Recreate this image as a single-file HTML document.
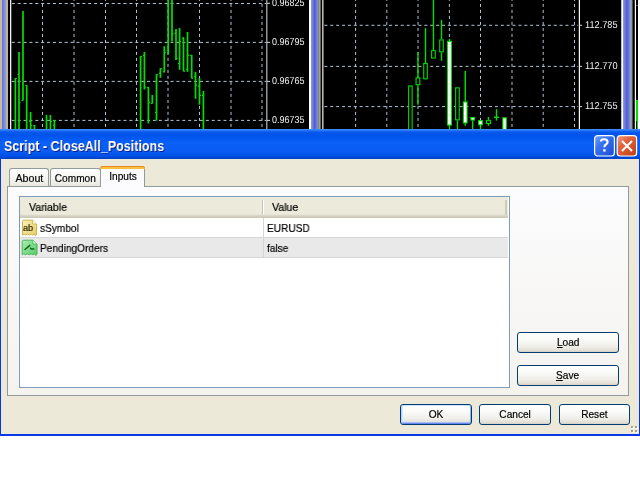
<!DOCTYPE html>
<html><head><meta charset="utf-8">
<style>
*{margin:0;padding:0;box-sizing:border-box}
html,body{width:640px;height:480px;overflow:hidden;background:#fff;font-family:"Liberation Sans",sans-serif}
.tab,#tabsel,.htxt,.rtxt,.btn{-webkit-text-stroke:0.2px #000}
.abs{position:absolute;will-change:transform}
.sx{display:inline-block;transform:scaleX(0.92)}
#title{left:0;top:129px;width:640px;height:30px;
 background:linear-gradient(to bottom,#4a96ff 0px,#2474fa 1.5px,#0a58ec 3px,#0054ea 6px,#0a60f8 14px,#0a5cf4 22px,#0052e6 27px,#0046d4 29px,#003cc4 30px);
}
#ttext{left:4px;top:137.8px;color:#fff;font-weight:bold;font-size:14px;transform:scaleX(0.895);transform-origin:0 0;text-shadow:1px 1px 0 #0a1e80;white-space:nowrap}
#frame{left:0;top:159px;width:640px;height:277px;background:#0638e8}
#client{left:1px;top:159px;width:638px;height:275px;background:#ece9d8}
.tbtn{top:135px;width:21px;height:21px;border:1px solid #fff;border-radius:3px}
#help{left:594px;background:linear-gradient(135deg,#6d9dff,#2a66ee 50%,#1850d8)}
#close{left:617px;width:20px;background:linear-gradient(135deg,#f08a60,#e05a2a 50%,#c8401a)}
.tab{top:168px;height:19px;border:1px solid #919b9c;border-bottom:none;border-radius:3px 3px 0 0;
 background:linear-gradient(to bottom,#fff,#f3f3ef 60%,#e8e6dc);font-size:11px;color:#000;text-align:center;padding-top:3px}
#panel{left:7px;top:186px;width:622px;height:210px;border:1px solid #919b9c;
 background:linear-gradient(to bottom,#fcfcfe,#f4f3ee)}
#tabsel{left:100px;top:166px;width:45px;height:21px;border:1px solid #919b9c;border-bottom:none;border-radius:3px 3px 0 0;background:#fcfcfe;
 font-size:11px;text-align:center;padding-top:3px}
#tabsel:before{content:"";position:absolute;left:-1px;right:-1px;top:-1px;height:2px;background:#fbc03a;border-radius:3px 3px 0 0;border-top:1px solid #e68b2c}
#lv{left:19px;top:196px;width:491px;height:192px;border:1px solid #7f9db9;background:#fff}
#hdr{left:20px;top:197px;width:488px;height:21px;background:linear-gradient(to bottom,#ebeadb 0,#ebeadb 17px,#e2decd 18px,#d6d2c2 19px,#cbc7b8 21px)}
.htxt{top:201px;font-size:11px;color:#000;transform:scaleX(0.96);transform-origin:0 0}
#hd1{left:262px;top:200px;width:1px;height:15px;background:#c7c5b2}
#hd2{left:263px;top:200px;width:1px;height:15px;background:#fff}
#hd3{left:505px;top:200px;width:2px;height:15px;background:#cdcab8}
#row2{left:20px;top:238px;width:488px;height:19px;background:#e9e9e9}
.gl{background:#d6d6d6}
.rtxt{font-size:11px;color:#000;white-space:nowrap;transform:scaleX(0.92);transform-origin:0 0}
.btn{border:1px solid #003c74;border-radius:3px;background:linear-gradient(to bottom,#fff 0,#fbfbf8 30%,#f0efea 70%,#e3e1d8 90%,#d6d0c5 100%);
 font-size:11px;text-align:center;color:#000}
#ok{box-shadow:inset 0 1px 0 #cee7ff, inset 1px 0 0 #b8d2f8, inset -1px 0 0 #8cb0f4, inset 0 -1px 0 #6c86ec, inset 0 -2px 0 #a4c0f8, inset 1px 0 0 1px #d8e8fc}
</style></head><body>
<svg width="640" height="130" viewBox="0 0 640 130" style="position:absolute;left:0;top:0;will-change:transform">
<rect x="0" y="0" width="640" height="130" fill="#000"/>
<defs><linearGradient id="fb" x1="0" x2="1" y1="0" y2="0"><stop offset="0" stop-color="#8a9ee8"/><stop offset="0.5" stop-color="#5558cc"/><stop offset="1" stop-color="#86a6ee"/></linearGradient><linearGradient id="fl" x1="0" x2="1" y1="0" y2="0"><stop offset="0" stop-color="#6470dc"/><stop offset="1" stop-color="#8ea0ee"/></linearGradient></defs>
<rect x="0" y="0" width="2" height="130" fill="#c6bc9c"/>
<rect x="2" y="0" width="4.3" height="130" fill="url(#fl)"/>
<rect x="6" y="0" width="2" height="130" fill="#c0b490"/>
<rect x="10" y="0" width="1.3" height="130" fill="#f0f0f0"/>
<rect x="266.2" y="0" width="1.2" height="130" fill="#b8b8b8"/>
<rect x="309" y="0" width="2" height="130" fill="#ffffff"/>
<rect x="311" y="0" width="7.6" height="130" fill="url(#fb)"/>
<rect x="318.6" y="0" width="2" height="130" fill="#b0a484"/>
<rect x="322" y="0" width="1.6" height="130" fill="#b4b4b4"/>
<rect x="578.8" y="0" width="1.2" height="130" fill="#f8f8f8"/>
<rect x="621" y="0" width="1" height="130" fill="#c8c0a8"/>
<rect x="622" y="0" width="1" height="130" fill="#ffffff"/>
<rect x="623" y="0" width="8" height="130" fill="url(#fb)"/>
<rect x="631" y="0" width="1.5" height="130" fill="#a09880"/>
<rect x="634.8" y="0" width="1.2" height="130" fill="#ffffff"/>
<rect x="638" y="0" width="2" height="130" fill="#ffffff"/>
<rect x="636" y="100" width="2" height="21.3" fill="#00e000"/>
<rect x="637" y="121" width="1" height="9" fill="#00e000"/>
<rect x="636.5" y="5" width="1" height="1" fill="#8ab0d0"/>
<line x1="42.5" y1="-2.1" x2="42.5" y2="130" stroke="#b4c4d4" stroke-width="1" stroke-dasharray="3 3"/>
<line x1="74" y1="-2.1" x2="74" y2="130" stroke="#b4c4d4" stroke-width="1" stroke-dasharray="3 3"/>
<line x1="105.5" y1="-2.1" x2="105.5" y2="130" stroke="#b4c4d4" stroke-width="1" stroke-dasharray="3 3"/>
<line x1="136.5" y1="-2.1" x2="136.5" y2="130" stroke="#b4c4d4" stroke-width="1" stroke-dasharray="3 3"/>
<line x1="168" y1="-2.1" x2="168" y2="130" stroke="#b4c4d4" stroke-width="1" stroke-dasharray="3 3"/>
<line x1="199.5" y1="-2.1" x2="199.5" y2="130" stroke="#b4c4d4" stroke-width="1" stroke-dasharray="3 3"/>
<line x1="231" y1="-2.1" x2="231" y2="130" stroke="#b4c4d4" stroke-width="1" stroke-dasharray="3 3"/>
<line x1="262" y1="-2.1" x2="262" y2="130" stroke="#b4c4d4" stroke-width="1" stroke-dasharray="3 3"/>
<line x1="11.8" y1="3.5" x2="266" y2="3.5" stroke="#b4c4d4" stroke-width="1" stroke-dasharray="3 2.88"/>
<line x1="11.8" y1="42.4" x2="266" y2="42.4" stroke="#b4c4d4" stroke-width="1" stroke-dasharray="3 2.88"/>
<line x1="11.8" y1="81.4" x2="266" y2="81.4" stroke="#b4c4d4" stroke-width="1" stroke-dasharray="3 2.88"/>
<line x1="11.8" y1="120.4" x2="266" y2="120.4" stroke="#b4c4d4" stroke-width="1" stroke-dasharray="3 2.88"/>
<line x1="355.6" y1="-2.1" x2="355.6" y2="130" stroke="#b4c4d4" stroke-width="1" stroke-dasharray="3 3"/>
<line x1="386.8" y1="-2.1" x2="386.8" y2="130" stroke="#b4c4d4" stroke-width="1" stroke-dasharray="3 3"/>
<line x1="418" y1="-2.1" x2="418" y2="130" stroke="#b4c4d4" stroke-width="1" stroke-dasharray="3 3"/>
<line x1="449.4" y1="-2.1" x2="449.4" y2="130" stroke="#b4c4d4" stroke-width="1" stroke-dasharray="3 3"/>
<line x1="480.5" y1="-2.1" x2="480.5" y2="130" stroke="#b4c4d4" stroke-width="1" stroke-dasharray="3 3"/>
<line x1="512" y1="-2.1" x2="512" y2="130" stroke="#b4c4d4" stroke-width="1" stroke-dasharray="3 3"/>
<line x1="543.2" y1="-2.1" x2="543.2" y2="130" stroke="#b4c4d4" stroke-width="1" stroke-dasharray="3 3"/>
<line x1="574.5" y1="-2.1" x2="574.5" y2="130" stroke="#b4c4d4" stroke-width="1" stroke-dasharray="3 3"/>
<line x1="324.4" y1="25.3" x2="578" y2="25.3" stroke="#b4c4d4" stroke-width="1" stroke-dasharray="3 2.88"/>
<line x1="324.4" y1="66.4" x2="578" y2="66.4" stroke="#b4c4d4" stroke-width="1" stroke-dasharray="3 2.88"/>
<line x1="324.4" y1="106.6" x2="578" y2="106.6" stroke="#b4c4d4" stroke-width="1" stroke-dasharray="3 2.88"/>
<line x1="267" y1="3.3" x2="270" y2="3.3" stroke="#ddd" stroke-width="1"/>
<text x="272" y="5.5" fill="#f4f4f4" font-family="Liberation Sans" font-size="10" text-rendering="geometricPrecision" textLength="32.5" lengthAdjust="spacingAndGlyphs">0.96825</text>
<line x1="267" y1="42.4" x2="270" y2="42.4" stroke="#ddd" stroke-width="1"/>
<text x="272" y="45.4" fill="#f4f4f4" font-family="Liberation Sans" font-size="10" text-rendering="geometricPrecision" textLength="32.5" lengthAdjust="spacingAndGlyphs">0.96795</text>
<line x1="267" y1="81.4" x2="270" y2="81.4" stroke="#ddd" stroke-width="1"/>
<text x="272" y="84.4" fill="#f4f4f4" font-family="Liberation Sans" font-size="10" text-rendering="geometricPrecision" textLength="32.5" lengthAdjust="spacingAndGlyphs">0.96765</text>
<line x1="267" y1="120.4" x2="270" y2="120.4" stroke="#ddd" stroke-width="1"/>
<text x="272" y="123.4" fill="#f4f4f4" font-family="Liberation Sans" font-size="10" text-rendering="geometricPrecision" textLength="32.5" lengthAdjust="spacingAndGlyphs">0.96735</text>
<line x1="579" y1="25.3" x2="582" y2="25.3" stroke="#ddd" stroke-width="1"/>
<text x="585" y="28.3" fill="#f4f4f4" font-family="Liberation Sans" font-size="10" text-rendering="geometricPrecision" textLength="32.5" lengthAdjust="spacingAndGlyphs">112.785</text>
<line x1="579" y1="66.4" x2="582" y2="66.4" stroke="#ddd" stroke-width="1"/>
<text x="585" y="69.4" fill="#f4f4f4" font-family="Liberation Sans" font-size="10" text-rendering="geometricPrecision" textLength="32.5" lengthAdjust="spacingAndGlyphs">112.770</text>
<line x1="579" y1="106.6" x2="582" y2="106.6" stroke="#ddd" stroke-width="1"/>
<text x="585" y="108.69999999999999" fill="#f4f4f4" font-family="Liberation Sans" font-size="10" text-rendering="geometricPrecision" textLength="32.5" lengthAdjust="spacingAndGlyphs">112.755</text>
<line x1="15.4" y1="78" x2="15.4" y2="130" stroke="#00e000" stroke-width="1.7"/>
<line x1="15.4" y1="78.5" x2="16.9" y2="78.5" stroke="#00e000" stroke-width="1.2"/>
<line x1="19.0" y1="52" x2="19.0" y2="130" stroke="#00e000" stroke-width="1.7"/>
<line x1="17.5" y1="74.4" x2="19.0" y2="74.4" stroke="#00e000" stroke-width="1.2"/>
<line x1="19.0" y1="102.5" x2="20.5" y2="102.5" stroke="#00e000" stroke-width="1.2"/>
<line x1="23.0" y1="11" x2="23.0" y2="100.5" stroke="#00e000" stroke-width="1.7"/>
<line x1="21.5" y1="100.5" x2="23.0" y2="100.5" stroke="#00e000" stroke-width="1.2"/>
<line x1="26.7" y1="85.2" x2="26.7" y2="130" stroke="#00e000" stroke-width="1.7"/>
<line x1="25.2" y1="85.5" x2="26.7" y2="85.5" stroke="#00e000" stroke-width="1.2"/>
<line x1="30.6" y1="112" x2="30.6" y2="130" stroke="#00e000" stroke-width="1.7"/>
<line x1="29.1" y1="121.3" x2="30.6" y2="121.3" stroke="#00e000" stroke-width="1.2"/>
<line x1="30.6" y1="125.3" x2="32.1" y2="125.3" stroke="#00e000" stroke-width="1.2"/>
<line x1="34.5" y1="125" x2="34.5" y2="130" stroke="#00e000" stroke-width="1.7"/>
<line x1="33.0" y1="125.5" x2="34.5" y2="125.5" stroke="#00e000" stroke-width="1.2"/>
<line x1="46.5" y1="115" x2="46.5" y2="130" stroke="#00e000" stroke-width="1.7"/>
<line x1="50.4" y1="115" x2="50.4" y2="130" stroke="#00e000" stroke-width="1.7"/>
<line x1="50.4" y1="121.5" x2="51.9" y2="121.5" stroke="#00e000" stroke-width="1.2"/>
<line x1="54.4" y1="120" x2="54.4" y2="130" stroke="#00e000" stroke-width="1.7"/>
<line x1="52.9" y1="125.4" x2="54.4" y2="125.4" stroke="#00e000" stroke-width="1.2"/>
<line x1="54.4" y1="120.5" x2="55.9" y2="120.5" stroke="#00e000" stroke-width="1.2"/>
<line x1="140.6" y1="56.2" x2="140.6" y2="130" stroke="#00e000" stroke-width="1.7"/>
<line x1="140.6" y1="56.5" x2="142.1" y2="56.5" stroke="#00e000" stroke-width="1.2"/>
<line x1="144.4" y1="52" x2="144.4" y2="89.5" stroke="#00e000" stroke-width="1.7"/>
<line x1="142.9" y1="55.4" x2="144.4" y2="55.4" stroke="#00e000" stroke-width="1.2"/>
<line x1="144.4" y1="87" x2="145.9" y2="87" stroke="#00e000" stroke-width="1.2"/>
<line x1="148.4" y1="87" x2="148.4" y2="123.4" stroke="#00e000" stroke-width="1.7"/>
<line x1="146.9" y1="87.5" x2="148.4" y2="87.5" stroke="#00e000" stroke-width="1.2"/>
<line x1="148.4" y1="102.3" x2="149.9" y2="102.3" stroke="#00e000" stroke-width="1.2"/>
<line x1="152.3" y1="95" x2="152.3" y2="103.5" stroke="#00e000" stroke-width="1.7"/>
<line x1="150.8" y1="103.5" x2="152.3" y2="103.5" stroke="#00e000" stroke-width="1.2"/>
<line x1="156.5" y1="74.2" x2="156.5" y2="120.6" stroke="#00e000" stroke-width="1.7"/>
<line x1="155.0" y1="112.5" x2="156.5" y2="112.5" stroke="#00e000" stroke-width="1.2"/>
<line x1="156.5" y1="74.5" x2="158.0" y2="74.5" stroke="#00e000" stroke-width="1.2"/>
<line x1="160.4" y1="68.3" x2="160.4" y2="77.8" stroke="#00e000" stroke-width="1.7"/>
<line x1="158.9" y1="73.3" x2="160.4" y2="73.3" stroke="#00e000" stroke-width="1.2"/>
<line x1="160.4" y1="68.7" x2="161.9" y2="68.7" stroke="#00e000" stroke-width="1.2"/>
<line x1="164.3" y1="46.2" x2="164.3" y2="72.5" stroke="#00e000" stroke-width="1.7"/>
<line x1="162.8" y1="71.7" x2="164.3" y2="71.7" stroke="#00e000" stroke-width="1.2"/>
<line x1="164.3" y1="52.5" x2="165.8" y2="52.5" stroke="#00e000" stroke-width="1.2"/>
<line x1="168.2" y1="0" x2="168.2" y2="54.5" stroke="#00e000" stroke-width="1.7"/>
<line x1="166.7" y1="50.4" x2="168.2" y2="50.4" stroke="#00e000" stroke-width="1.2"/>
<line x1="172.0" y1="0" x2="172.0" y2="41.4" stroke="#00e000" stroke-width="1.7"/>
<line x1="172.0" y1="34.2" x2="173.5" y2="34.2" stroke="#00e000" stroke-width="1.2"/>
<line x1="176.0" y1="29" x2="176.0" y2="60.1" stroke="#00e000" stroke-width="1.7"/>
<line x1="174.5" y1="33.3" x2="176.0" y2="33.3" stroke="#00e000" stroke-width="1.2"/>
<line x1="176.0" y1="58.3" x2="177.5" y2="58.3" stroke="#00e000" stroke-width="1.2"/>
<line x1="179.6" y1="28" x2="179.6" y2="69.8" stroke="#00e000" stroke-width="1.7"/>
<line x1="178.1" y1="63.4" x2="179.6" y2="63.4" stroke="#00e000" stroke-width="1.2"/>
<line x1="179.6" y1="41.3" x2="181.1" y2="41.3" stroke="#00e000" stroke-width="1.2"/>
<line x1="183.5" y1="37.3" x2="183.5" y2="71.4" stroke="#00e000" stroke-width="1.7"/>
<line x1="182.0" y1="38.2" x2="183.5" y2="38.2" stroke="#00e000" stroke-width="1.2"/>
<line x1="183.5" y1="71.2" x2="185.0" y2="71.2" stroke="#00e000" stroke-width="1.2"/>
<line x1="187.5" y1="32" x2="187.5" y2="71.9" stroke="#00e000" stroke-width="1.7"/>
<line x1="186.0" y1="69.5" x2="187.5" y2="69.5" stroke="#00e000" stroke-width="1.2"/>
<line x1="187.5" y1="55.3" x2="189.0" y2="55.3" stroke="#00e000" stroke-width="1.2"/>
<line x1="191.7" y1="55" x2="191.7" y2="78.4" stroke="#00e000" stroke-width="1.7"/>
<line x1="190.2" y1="55.4" x2="191.7" y2="55.4" stroke="#00e000" stroke-width="1.2"/>
<line x1="191.7" y1="78.2" x2="193.2" y2="78.2" stroke="#00e000" stroke-width="1.2"/>
<line x1="195.5" y1="71.9" x2="195.5" y2="98.8" stroke="#00e000" stroke-width="1.7"/>
<line x1="194.0" y1="76.4" x2="195.5" y2="76.4" stroke="#00e000" stroke-width="1.2"/>
<line x1="195.5" y1="85.2" x2="197.0" y2="85.2" stroke="#00e000" stroke-width="1.2"/>
<line x1="199.5" y1="78" x2="199.5" y2="104.7" stroke="#00e000" stroke-width="1.7"/>
<line x1="198.0" y1="86.2" x2="199.5" y2="86.2" stroke="#00e000" stroke-width="1.2"/>
<line x1="199.5" y1="95.4" x2="201.0" y2="95.4" stroke="#00e000" stroke-width="1.2"/>
<line x1="203.4" y1="90.9" x2="203.4" y2="130" stroke="#00e000" stroke-width="1.7"/>
<line x1="201.9" y1="95.4" x2="203.4" y2="95.4" stroke="#00e000" stroke-width="1.2"/>
<rect x="408.65000000000003" y="85.95" width="3.499999999999966" height="44.49999999999999" fill="#000" stroke="#00e000" stroke-width="1.1"/>
<line x1="417.95" y1="52" x2="417.95" y2="77.3" stroke="#00e000" stroke-width="1.4"/>
<line x1="417.95" y1="85.2" x2="417.95" y2="104.8" stroke="#00e000" stroke-width="1.4"/>
<rect x="416.05" y="77.85" width="3.799999999999977" height="6.800000000000006" fill="#000" stroke="#00e000" stroke-width="1.1"/>
<line x1="425.5" y1="28.1" x2="425.5" y2="63" stroke="#00e000" stroke-width="1.4"/>
<rect x="423.75" y="63.55" width="3.5000000000000226" height="15.300000000000006" fill="#000" stroke="#00e000" stroke-width="1.1"/>
<line x1="433.45000000000005" y1="-2" x2="433.45000000000005" y2="50.1" stroke="#00e000" stroke-width="1.4"/>
<rect x="431.65000000000003" y="50.65" width="3.5999999999999885" height="7.4" fill="#000" stroke="#00e000" stroke-width="1.1"/>
<line x1="441.5" y1="19.9" x2="441.5" y2="39.4" stroke="#00e000" stroke-width="1.4"/>
<line x1="441.5" y1="52.4" x2="441.5" y2="60.8" stroke="#00e000" stroke-width="1.4"/>
<rect x="439.75" y="39.949999999999996" width="3.5000000000000226" height="11.9" fill="#000" stroke="#00e000" stroke-width="1.1"/>
<line x1="449.5" y1="38.9" x2="449.5" y2="40.8" stroke="#00e000" stroke-width="1.4"/>
<line x1="449.5" y1="125.6" x2="449.5" y2="131" stroke="#00e000" stroke-width="1.4"/>
<rect x="447.55" y="41.349999999999994" width="3.9" height="83.7" fill="#fff" stroke="#00e000" stroke-width="1.1"/>
<line x1="457.45000000000005" y1="120.4" x2="457.45000000000005" y2="131" stroke="#00e000" stroke-width="1.4"/>
<rect x="455.65000000000003" y="87.85" width="3.5999999999999885" height="32.00000000000001" fill="#000" stroke="#00e000" stroke-width="1.1"/>
<line x1="465.25" y1="70.9" x2="465.25" y2="101.4" stroke="#00e000" stroke-width="1.4"/>
<line x1="465.25" y1="123.5" x2="465.25" y2="125.8" stroke="#00e000" stroke-width="1.4"/>
<rect x="463.45" y="101.95" width="3.6000000000000454" height="20.999999999999993" fill="#fff" stroke="#00e000" stroke-width="1.1"/>
<line x1="472.65" y1="120.6" x2="472.65" y2="131" stroke="#00e000" stroke-width="1.4"/>
<rect x="470.95" y="117.55" width="3.4" height="2.4999999999999942" fill="#fff" stroke="#00e000" stroke-width="1.1"/>
<line x1="480.45000000000005" y1="125.3" x2="480.45000000000005" y2="131" stroke="#00e000" stroke-width="1.4"/>
<rect x="478.65000000000003" y="120.64999999999999" width="3.5999999999999885" height="4.100000000000003" fill="#fff" stroke="#00e000" stroke-width="1.1"/>
<line x1="488.45" y1="117" x2="488.45" y2="120.1" stroke="#00e000" stroke-width="1.4"/>
<line x1="488.45" y1="124.0" x2="488.45" y2="125.8" stroke="#00e000" stroke-width="1.4"/>
<rect x="486.45" y="120.64999999999999" width="4.000000000000023" height="2.8000000000000056" fill="#000" stroke="#00e000" stroke-width="1.1"/>
<line x1="496.5" y1="109.2" x2="496.5" y2="117.3" stroke="#00e000" stroke-width="1.4"/>
<line x1="496.5" y1="117.3" x2="496.5" y2="120.6" stroke="#00e000" stroke-width="1.4"/>
<line x1="494.0" y1="117.3" x2="499.0" y2="117.3" stroke="#00e000" stroke-width="1.4"/>
<rect x="502.85" y="117.85" width="3.4" height="12.600000000000003" fill="#fff" stroke="#00e000" stroke-width="1.1"/>
</svg>
<div class="abs" id="frame"></div>
<div class="abs" id="client"></div>
<div class="abs" id="title"></div>
<div class="abs" id="ttext">Script - CloseAll_Positions</div>
<svg class="abs" style="left:593px;top:134px" width="46" height="23" viewBox="0 0 46 23">
<defs>
<linearGradient id="hb" x1="0" y1="0" x2="1" y2="1"><stop offset="0" stop-color="#7aa6ff"/><stop offset="0.35" stop-color="#3a74f4"/><stop offset="1" stop-color="#1a4ad0"/></linearGradient>
<linearGradient id="cb" x1="0" y1="0" x2="1" y2="1"><stop offset="0" stop-color="#f2a088"/><stop offset="0.35" stop-color="#e2643c"/><stop offset="1" stop-color="#c03c14"/></linearGradient>
</defs>
<rect x="1.6" y="1.6" width="19.8" height="20.4" rx="3" fill="url(#hb)" stroke="#fff" stroke-width="1.2"/>
<path d="M8,7.4 Q8,5.2 11.2,5.2 Q14.6,5.2 14.6,8 Q14.6,9.8 12.6,10.8 Q11.4,11.4 11.4,13.2" fill="none" stroke="#fff" stroke-width="2.1"/>
<rect x="10.2" y="15.2" width="2.4" height="2.4" fill="#fff"/>
<rect x="24.2" y="1.6" width="19.4" height="20.4" rx="3" fill="url(#cb)" stroke="#fff" stroke-width="1.2"/>
<path d="M29,7 L39,17 M39,7 L29,17" stroke="#fff" stroke-width="2"/>
</svg>
<div class="abs tab" style="left:9px;width:40px"><span class="sx" style="transform:scaleX(0.97)">About</span></div>
<div class="abs tab" style="left:50px;width:51px"><span class="sx">Common</span></div>
<div class="abs" id="panel"></div>
<div class="abs" id="tabsel"><span class="sx">Inputs</span></div>
<div class="abs" id="lv"></div>
<div class="abs" id="hdr"></div>
<div class="abs" id="hd1"></div><div class="abs" id="hd2"></div><div class="abs" id="hd3"></div>
<div class="abs htxt" style="left:29px">Variable</div>
<div class="abs htxt" style="left:272px">Value</div>
<div class="abs" id="row2"></div>
<div class="abs gl" style="left:20px;top:237px;width:488px;height:1px"></div>
<div class="abs gl" style="left:20px;top:257px;width:488px;height:1px"></div>
<div class="abs gl" style="left:263px;top:218px;width:1px;height:40px"></div>
<svg class="abs" style="left:21px;top:219px" width="17" height="18" viewBox="0 0 17 18">
<defs><linearGradient id="gy" x1="0" y1="0" x2="1" y2="1"><stop offset="0" stop-color="#fbf0b8"/><stop offset="1" stop-color="#e6cc68"/></linearGradient>
<linearGradient id="gg" x1="0" y1="0" x2="1" y2="1"><stop offset="0" stop-color="#a8eeb0"/><stop offset="1" stop-color="#58c868"/></linearGradient></defs>
<path d="M1.5,2.5 Q1.5,1.2 2.8,1.2 L11.5,1.2 L15.6,5 L15.6,15.2 L14.4,16.8 L13.2,15 L11.6,16 L10,15 L8.2,16 L6.4,15 L4.6,16 L3,15 L1.5,16.2 Z" fill="url(#gy)" stroke="#cdb24a" stroke-width="1"/>
<path d="M11.5,1.2 L11.5,5 L15.6,5" fill="#fffbe0" stroke="#cdb24a" stroke-width="0.8"/>
<text x="2" y="11.7" font-family="Liberation Sans" font-size="9.2" fill="#2e2800" stroke="#2e2800" stroke-width="0.2">ab</text>
</svg>
<svg class="abs" style="left:21px;top:239px" width="17" height="18" viewBox="0 0 17 18">
<path d="M1.2,2.5 Q1.2,1.2 2.6,1.2 L11.8,1.2 L16,5 L16,15 L14.8,16.5 L13.4,14.8 L11.8,15.8 L10,14.8 L8.2,15.8 L6.4,14.8 L4.6,15.8 L2.8,14.8 L1.2,15.8 Z" fill="url(#gg)" stroke="#48b458" stroke-width="1"/>
<path d="M11.8,1.2 L11.8,5 L16,5" fill="#d8f8dc" stroke="#48b458" stroke-width="0.8"/>
<path d="M4,10.5 L8.8,6.4" stroke="#0a6a14" stroke-width="1.5" fill="none" stroke-linecap="round"/>
<path d="M9.6,9.2 L9.8,9.8 L12.8,10" stroke="#0a6a14" stroke-width="1.4" fill="none" stroke-linecap="round"/>
</svg>
<div class="abs rtxt" style="left:40px;top:222px">sSymbol</div>
<div class="abs rtxt" style="left:267px;top:222px">EURUSD</div>
<div class="abs rtxt" style="left:40px;top:242px">PendingOrders</div>
<div class="abs rtxt" style="left:267px;top:242px">false</div>
<div class="abs btn" style="left:517px;top:332px;width:102px;height:21px;padding-top:3.4px"><span class="sx"><u>L</u>oad</span></div>
<div class="abs btn" style="left:517px;top:365px;width:102px;height:21px;padding-top:3.4px"><span class="sx"><u>S</u>ave</span></div>
<div class="abs btn" id="ok" style="left:400px;top:404px;width:72px;height:21px;padding-top:3.4px"><span class="sx">OK</span></div>
<div class="abs btn" style="left:479px;top:404px;width:72px;height:21px;padding-top:3.4px"><span class="sx">Cancel</span></div>
<div class="abs btn" style="left:559px;top:404px;width:71px;height:21px;padding-top:3.4px"><span class="sx">Reset</span></div>
<div class="abs" style="left:631px;top:426px;width:2px;height:2px;background:#a8a48c;box-shadow:1px 1px 0 #fff"></div>
<div class="abs" style="left:635px;top:426px;width:2px;height:2px;background:#a8a48c;box-shadow:1px 1px 0 #fff"></div>
<div class="abs" style="left:631px;top:430px;width:2px;height:2px;background:#a8a48c;box-shadow:1px 1px 0 #fff"></div>
<div class="abs" style="left:635px;top:430px;width:2px;height:2px;background:#a8a48c;box-shadow:1px 1px 0 #fff"></div>
</body></html>
